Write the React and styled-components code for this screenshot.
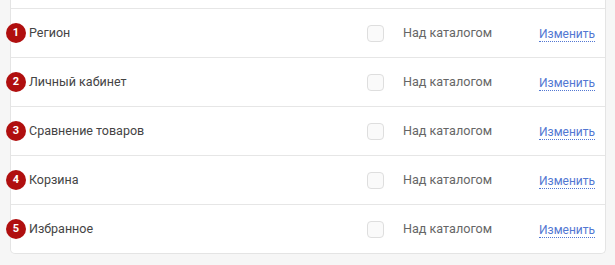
import React from 'react';
import styled, { createGlobalStyle } from 'styled-components';

const items = ['Регион', 'Личный кабинет', 'Сравнение товаров', 'Корзина', 'Избранное'];

const App = () => {
    return (
        <>
            <GlobalStyle />
            <Panel>
                {items.map((name, i) => (
                    <Row key={name}>
                        <Label>
                            <Badge>{i + 1}</Badge>
                            {name}
                        </Label>
                        <CheckCell>
                            <Check />
                        </CheckCell>
                        <Place>Над каталогом</Place>
                        <EditLink href="#">Изменить</EditLink>
                    </Row>
                ))}
            </Panel>
        </>
    );
};

export default App;

// styles

const GlobalStyle = createGlobalStyle`
    body {
        margin: 0;
        background: #f6f6f6;
        font-family: Roboto, "Liberation Sans", sans-serif;
    }
`;

const Panel = styled.div`
    margin-left: 10px;
    width: 596px;
    padding-top: 8px;
    background: #fff;
    border: 1px solid #e4e4e4;
    border-top: none;
    border-radius: 0 0 5px 5px;
    box-sizing: border-box;
`;

const Row = styled.div`
    display: grid;
    grid-template-columns: 1fr 36px 136px 52px;
    align-items: center;
    height: 48px;
    padding-right: 14px;
    border-top: 1px solid #e6e6e6;
`;

const Label = styled.div`
    display: flex;
    align-items: center;
    gap: 3px;
    margin-left: -5px;
    margin-top: -1px;
    font-size: 12.5px;
    color: #444;
`;

const Badge = styled.span`
    display: inline-flex;
    align-items: center;
    justify-content: center;
    width: 20px;
    height: 20px;
    border-radius: 50%;
    background: #b00f0f;
    color: #fff;
    font-size: 11px;
    font-weight: 700;
`;

const CheckCell = styled.div`
    display: flex;
`;

const Check = styled.span`
    width: 15px;
    height: 15px;
    border: 1px solid #dedede;
    border-radius: 4px;
    background: #fafafa;
`;

const Place = styled.div`
    font-size: 12.6px;
    color: #666;
    margin-top: -2px;
`;

const EditLink = styled.a`
    font-size: 12px;
    color: #5277d2;
    text-decoration: none;
    border-bottom: 1px dotted #5277d2;
    justify-self: start;
    line-height: 14px;
    margin-top: 2px;
`;
